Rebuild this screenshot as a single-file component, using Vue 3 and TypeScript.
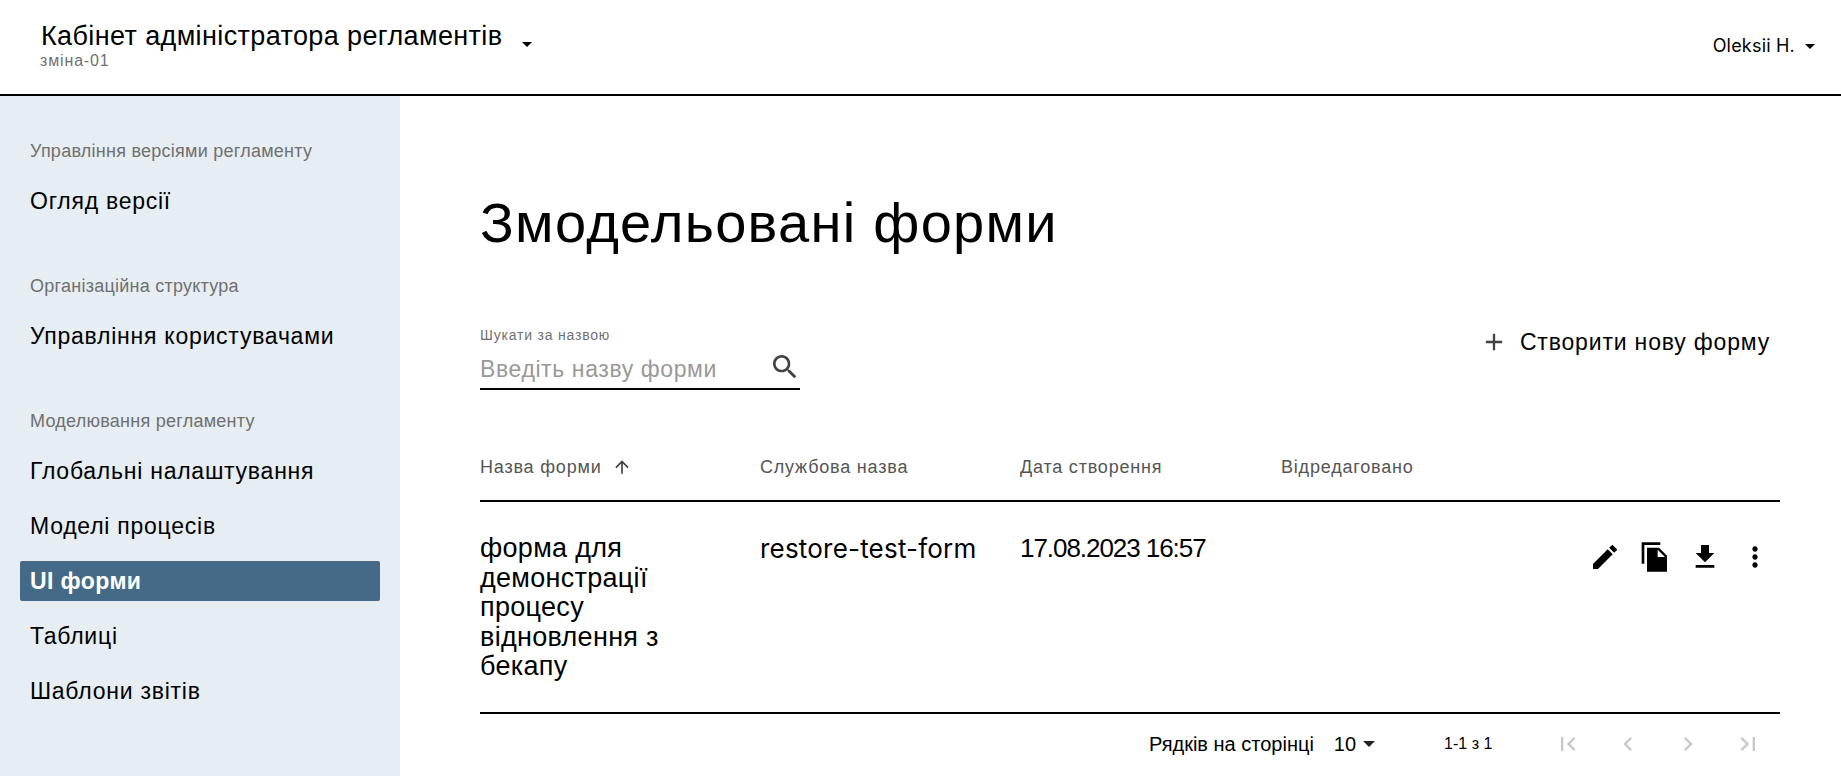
<script setup lang="ts">
interface NavSection { label: string; items: { name: string; active?: boolean }[] }
const sections: NavSection[] = [
  { label: 'Управління версіями регламенту', items: [{ name: 'Огляд версії' }] },
  { label: 'Організаційна структура', items: [{ name: 'Управління користувачами' }] },
  {
    label: 'Моделювання регламенту',
    items: [
      { name: 'Глобальні налаштування' },
      { name: 'Моделі процесів' },
      { name: 'UI форми', active: true },
      { name: 'Таблиці' },
      { name: 'Шаблони звітів' },
    ],
  },
]
const columns = ['Назва форми', 'Службова назва', 'Дата створення', 'Відредаговано']
</script>

<template>
  <div class="page">
    <header class="header">
      <div class="brand">
        <div class="brand-text">
          <div class="brand-title">Кабінет адміністратора регламентів</div>
          <div class="brand-sub">зміна-01</div>
        </div>
        <span class="caret brand-caret"></span>
      </div>
      <div class="user"><span>Oleksii H.</span><span class="caret"></span></div>
    </header>
    <div class="body">
      <aside class="sidebar">
        <section v-for="s in sections" :key="s.label" class="nav-section">
          <div class="nav-label">{{ s.label }}</div>
          <a v-for="i in s.items" :key="i.name" class="nav-item" :class="{ active: i.active }">{{ i.name }}</a>
        </section>
      </aside>
      <main class="main">
        <h1 class="title">Змодельовані форми</h1>
        <div class="toolbar">
          <div class="search">
            <div class="search-label">Шукати за назвою</div>
            <div class="search-box">
              <span class="placeholder">Введіть назву форми</span>
              <svg class="search-icon" viewBox="0 0 24 24" width="32" height="32"><path fill="#424242" d="M15.5 14h-.79l-.28-.27C15.41 12.59 16 11.11 16 9.5 16 5.91 13.09 3 9.5 3S3 5.91 3 9.5 5.91 16 9.5 16c1.61 0 3.09-.59 4.23-1.57l.27.28v.79l5 4.99L20.49 19l-4.99-5zm-6 0C7.01 14 5 11.99 5 9.5S7.01 5 9.5 5 14 7.01 14 9.5 11.99 14 9.5 14z"/></svg>
            </div>
          </div>
          <button class="create">
            <svg viewBox="0 0 24 24" width="28" height="28"><path fill="#424242" d="M19 13h-6v6h-2v-6H5v-2h6V5h2v6h6v2z"/></svg>
            <span>Створити нову форму</span>
          </button>
        </div>
        <div class="table">
          <div class="row head">
            <div v-for="(c, n) in columns" :key="c" class="cell">
              {{ c }}
              <svg v-if="n === 0" class="sort" viewBox="0 0 24 24" width="20" height="20"><path fill="#424242" d="M4 12l1.41 1.41L11 7.83V20h2V7.83l5.58 5.59L20 12l-8-8-8 8z"/></svg>
            </div>
            <div class="cell"></div>
          </div>
          <div class="row data">
            <div class="cell name">форма для демонстрації процесу відновлення з бекапу</div>
            <div class="cell service">restore-test-form</div>
            <div class="cell date">17.08.2023 16:57</div>
            <div class="cell"></div>
            <div class="cell actions">
              <svg viewBox="0 0 24 24" width="32" height="32"><path d="M3 21h3.75L17.81 9.94l-3.75-3.75L3 17.25V21zM15.13 5.12l3.75 3.75 2.37-2.37-3.75-3.75z"/></svg>
              <svg viewBox="0 0 24 24" width="32" height="32"><path fill-rule="evenodd" d="M16 1H2v16h2V3h12V1zM15 5H6v18h15V11l-6-6zm-1 7V6.5l5.5 5.5H14z"/></svg>
              <svg viewBox="0 0 24 24" width="32" height="32"><path d="M19 9h-4V3H9v6H5l7 7 7-7zM5 18v2h14v-2H5z"/></svg>
              <svg viewBox="0 0 24 24" width="32" height="32"><path d="M12 8c1.1 0 2-.9 2-2s-.9-2-2-2-2 .9-2 2 .9 2 2 2zm0 2c-1.1 0-2 .9-2 2s.9 2 2 2 2-.9 2-2-.9-2-2-2zm0 6c-1.1 0-2 .9-2 2s.9 2 2 2 2-.9 2-2-.9-2-2-2z"/></svg>
            </div>
          </div>
        </div>
        <footer class="pager">
          <span class="rows-label">Рядків на сторінці</span>
          <span class="rows-value">10</span>
          <span class="caret pager-caret"></span>
          <span class="range">1-1 з 1</span>
          <div class="pager-icons">
            <svg viewBox="0 0 24 24" width="28" height="28"><path d="M18.41 16.59L13.82 12l4.59-4.59L17 6l-6 6 6 6zM6 6h2v12H6z"/></svg>
            <svg viewBox="0 0 24 24" width="28" height="28"><path d="M15.41 7.41L14 6l-6 6 6 6 1.41-1.41L10.83 12z"/></svg>
            <svg viewBox="0 0 24 24" width="28" height="28"><path d="M10 6L8.59 7.41 13.17 12l-4.58 4.59L10 18l6-6z"/></svg>
            <svg viewBox="0 0 24 24" width="28" height="28"><path d="M5.59 7.41L10.18 12l-4.59 4.59L7 18l6-6-6-6zM16 6h2v12h-2z"/></svg>
          </div>
        </footer>
      </main>
    </div>
  </div>
</template>

<style>
html, body { margin: 0; background: #fff; overflow: hidden; }
</style>
<style scoped>
.page { width: 1841px; height: 776px; display: flex; flex-direction: column; font-family: "Liberation Sans", Arial, sans-serif; color: #000; overflow: hidden; }
.header { height: 94px; flex: none; box-sizing: content-box; border-bottom: 2px solid #000; display: flex; justify-content: space-between; align-items: flex-start; padding: 0 26px 0 41px; }
.brand { display: flex; align-items: flex-start; margin-top: 21px; }
.brand-title { font-size: 27px; line-height: 30px; letter-spacing: 0.38px; }
.brand-sub { font-size: 16px; line-height: 16px; color: #707070; letter-spacing: 0.85px; margin: 2px 0 0 -1px; }
.caret { display: inline-block; width: 0; height: 0; border-left: 5px solid transparent; border-right: 5px solid transparent; border-top: 5px solid #000; }
.brand-caret { margin: 21px 0 0 20px; }
.user { display: flex; align-items: center; gap: 10px; margin-top: 36px; font-family: Inter, sans-serif; font-size: 18px; line-height: 20px; letter-spacing: 0.2px; }
.body { flex: 1; display: flex; min-height: 0; }
.sidebar { width: 400px; flex: none; background: #e6edf3; padding: 47px 20px 0; box-sizing: border-box; }
.nav-section { margin-bottom: 57px; }
.nav-label { font-size: 18px; line-height: 16px; color: #707070; padding-left: 10px; margin-bottom: 22px; letter-spacing: 0.25px; }
.nav-item { display: flex; align-items: center; height: 40px; padding-left: 10px; margin-bottom: 15px; font-size: 23px; letter-spacing: 0.75px; border-radius: 2px; }
.nav-section .nav-item:last-child { margin-bottom: 0; }
.nav-item.active { background: #446a87; color: #fff; font-weight: 700; letter-spacing: 0.4px; }
.main { flex: 1; min-width: 0; padding: 0 61px 0 80px; }
.title { margin: 92px 0 0; font-size: 56px; line-height: 70px; font-weight: 400; letter-spacing: 1.3px; }
.toolbar { display: flex; justify-content: space-between; align-items: flex-start; margin-top: 70px; }
.search { width: 320px; }
.search-label { font-size: 14px; line-height: 14px; color: #707070; letter-spacing: 0.8px; }
.search-box { display: flex; justify-content: space-between; align-items: center; height: 42px; padding: 4px 0 0; border-bottom: 2px solid #000; box-sizing: content-box; }
.search-icon { margin-right: -1px; }
.placeholder { font-size: 23px; color: #999; letter-spacing: 0.6px; margin-top: 4px; }
.create { display: flex; align-items: center; gap: 12px; border: 0; background: none; padding: 0 10px 0 0; font: inherit; font-size: 23px; letter-spacing: 0.82px; color: #000; }
.table { margin-top: 56px; }
.row { display: grid; grid-template-columns: 280px 260px 261px 1fr 260px; }
.head { height: 54px; align-items: center; border-bottom: 2px solid #000; font-size: 18px; color: #555; letter-spacing: 0.8px; }
.head .cell { display: flex; align-items: center; gap: 10px; padding-bottom: 12px; }
.data { height: 210px; box-sizing: content-box; border-bottom: 2px solid #000; font-size: 27px; line-height: 29.6px; letter-spacing: 0.3px; }
.data .cell { padding-top: 32px; }
.data .name { padding-top: 32px; padding-right: 60px; }
.service { font-family: Inter, sans-serif; font-size: 26px; letter-spacing: 0.2px; }
.date { font-size: 26px; letter-spacing: -1.05px; }
.data .actions { display: flex; justify-content: flex-end; gap: 18px; padding-top: 39px; padding-right: 9px; }
.pager { display: flex; align-items: center; height: 60px; padding-left: 669px; font-size: 20px; }
.rows-value { margin-left: 20px; font-size: 20px; }
.pager-caret { margin-left: 7px; border-top-color: #222; border-left-width: 6px; border-right-width: 6px; border-top-width: 6px; }
.range { margin-left: 69px; font-size: 16px; }
.pager-icons { display: flex; gap: 32px; margin-left: 62px; }
.pager-icons svg { fill: #c8c8c8; }
</style>
